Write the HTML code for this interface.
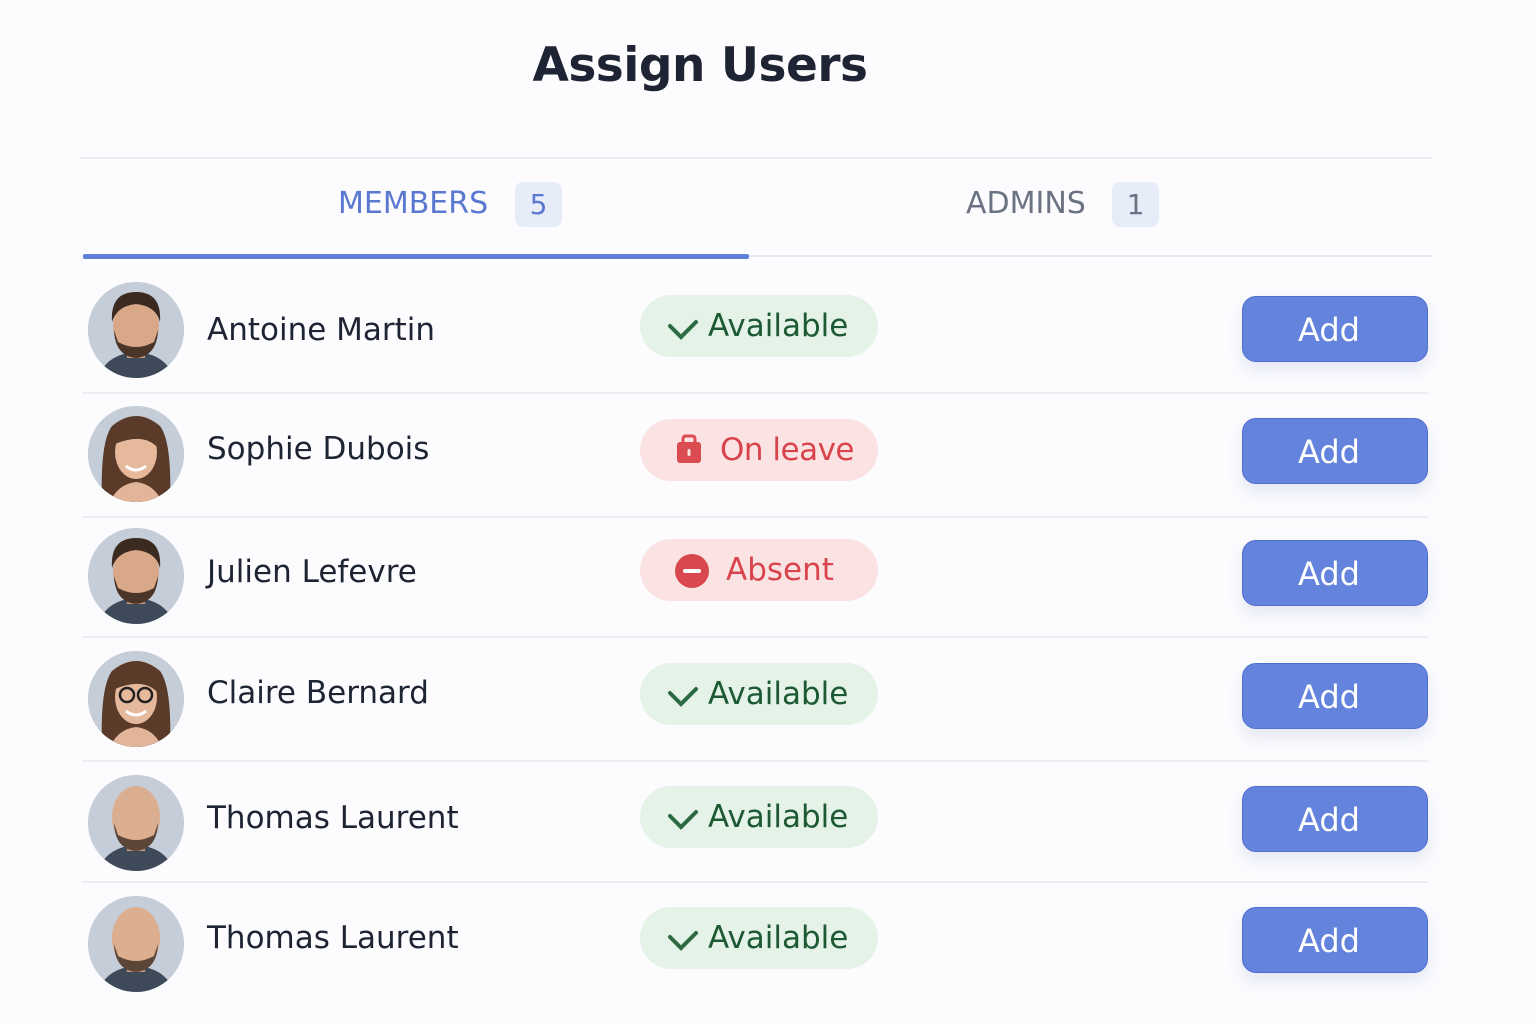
<!DOCTYPE html>
<html><head><meta charset="utf-8"><style>
body{margin:0;width:1536px;height:1024px;background:#fcfcfe;font-family:"DejaVu Sans","Liberation Sans",sans-serif;position:relative;overflow:hidden}
.a{position:absolute}
h1{position:absolute;left:0;width:1400px;text-align:center;top:38px;margin:0;font-size:47px;font-weight:bold;color:#1e2433;font-family:"DejaVu Sans",sans-serif;letter-spacing:-0.5px}
.tab{position:absolute;top:186px;font-size:30px;line-height:36px}
.badge{position:absolute;top:182px;width:47px;height:45px;border-radius:8px;background:#e6ecf8;font-size:28px;line-height:45px;text-align:center}
.name{position:absolute;left:207px;font-size:31px;color:#1e2433;line-height:40px}
.pill{position:absolute;left:640px;width:238px;height:62px;border-radius:31px;font-size:31px;line-height:62px;box-sizing:border-box}
.g{background:#e4f2e7;color:#1d5a34}
.r{background:#fbe3e3;color:#d9444c}
.btn{position:absolute;left:1242px;width:186px;height:66px;border-radius:14px;background:#6383dc;color:#fff;font-size:32px;line-height:66px;text-align:center;box-shadow:0 8px 16px rgba(90,110,180,.15);border:1px solid #4f6fd0;box-sizing:border-box;padding-right:12px}
.div{position:absolute;left:82px;width:1346px;height:2px;background:#ecedf3}
.av{position:absolute;left:88px;width:96px;height:96px;border-radius:50%;overflow:hidden;background:#c3ccd8}
</style></head><body>
<h1>Assign Users</h1>
<div class="a" style="left:80px;top:157px;width:1352px;height:2px;background:#eceef4"></div>
<div class="tab" style="left:338px;color:#5a78d0">MEMBERS</div>
<div class="badge" style="left:515px;color:#5a78d0">5</div>
<div class="tab" style="left:966px;color:#6b7282">ADMINS</div>
<div class="badge" style="left:1112px;color:#6b7282">1</div>
<div class="a" style="left:83px;top:255px;width:1349px;height:2px;background:#e6e9f2"></div>
<div class="a" style="left:83px;top:254px;width:666px;height:5px;background:#5f80d8;border-radius:2px"></div>

<div class="div" style="top:392px"></div>
<div class="div" style="top:516px"></div>
<div class="div" style="top:636px"></div>
<div class="div" style="top:760px"></div>
<div class="div" style="top:881px"></div>

<svg width="0" height="0" style="position:absolute"><defs>
<g id="m"><rect width="96" height="96" fill="#c4cdd8"/><path d="M10 96 Q18 72 48 70 Q78 72 86 96Z" fill="#3e4a5a"/><rect x="39" y="60" width="18" height="16" fill="#c9977a"/><ellipse cx="48" cy="44" rx="23" ry="29" fill="#d8a889"/><path d="M26 48 Q27 74 48 76 Q69 74 70 48 L66 60 Q48 70 30 60Z" fill="#4a3528"/><path d="M24 40 Q22 10 48 10 Q74 10 72 40 Q68 24 48 22 Q29 24 24 40Z" fill="#3a2a20"/></g>
<g id="b"><rect width="96" height="96" fill="#c4cdd8"/><path d="M10 96 Q18 72 48 70 Q78 72 86 96Z" fill="#3e4a5a"/><rect x="39" y="60" width="18" height="16" fill="#c9977a"/><ellipse cx="48" cy="42" rx="24" ry="31" fill="#dcae90"/><path d="M26 48 Q27 74 48 76 Q69 74 70 48 L66 60 Q48 70 30 60Z" fill="#5a4536"/></g>
<g id="f"><rect width="96" height="96" fill="#c4cdd8"/><path d="M14 96 Q12 36 24 20 Q48 0 72 20 Q84 36 82 96Z" fill="#5a3a28"/><path d="M22 96 Q30 78 48 76 Q66 78 74 96Z" fill="#e2b498"/><ellipse cx="48" cy="46" rx="21" ry="27" fill="#e6b89c"/><path d="M27 38 Q34 14 58 20 Q70 28 70 42 Q56 26 27 38Z" fill="#5a3a28"/><path d="M38 60 Q48 68 58 60" stroke="#fff" stroke-width="3" fill="none"/></g>
</defs></svg>
<svg class="av" style="top:282px" viewBox="0 0 96 96"><use href="#m"/></svg>
<svg class="av" style="top:406px" viewBox="0 0 96 96"><use href="#f"/></svg>
<svg class="av" style="top:528px" viewBox="0 0 96 96"><use href="#m"/></svg>
<svg class="av" style="top:651px" viewBox="0 0 96 96"><g><use href="#f"/></g><circle cx="39" cy="44" r="7" fill="none" stroke="#222" stroke-width="2.5"/><circle cx="57" cy="44" r="7" fill="none" stroke="#222" stroke-width="2.5"/></svg>
<svg class="av" style="top:775px" viewBox="0 0 96 96"><use href="#b"/></svg>
<svg class="av" style="top:896px" viewBox="0 0 96 96"><use href="#b"/></svg>

<div class="name" style="top:310px">Antoine Martin</div>
<div class="name" style="top:429px">Sophie Dubois</div>
<div class="name" style="top:552px">Julien Lefevre</div>
<div class="name" style="top:673px">Claire Bernard</div>
<div class="name" style="top:798px">Thomas Laurent</div>
<div class="name" style="top:918px">Thomas Laurent</div>

<div class="pill g" style="top:295px;padding-left:68px">Available</div>
<svg class="a" style="left:667px;top:318px" width="32" height="22"><path d="M3 8 L14 19 L29 4" stroke="#2b6a42" stroke-width="4" fill="none" stroke-linecap="round"/></svg>

<div class="pill r" style="top:419px;padding-left:80px;letter-spacing:-0.5px">On leave</div>
<svg class="a" style="left:673px;top:433px" width="32" height="32"><rect x="4" y="9" width="24" height="21" rx="3" fill="#db4c52"/><path d="M10 10 V6 Q10 3 13 3 H19 Q22 3 22 6 V10" stroke="#db4c52" stroke-width="3" fill="none"/><rect x="14.5" y="16" width="3" height="7" rx="1.5" fill="#fbe3e3"/></svg>

<div class="pill r" style="top:539px;padding-left:86px">Absent</div>
<svg class="a" style="left:674px;top:553px" width="36" height="36"><circle cx="18" cy="18" r="17" fill="#d9484f"/><rect x="9" y="16" width="18" height="4" rx="2" fill="#fff"/></svg>

<div class="pill g" style="top:663px;padding-left:68px">Available</div>
<svg class="a" style="left:667px;top:685px" width="32" height="22"><path d="M3 8 L14 19 L29 4" stroke="#2b6a42" stroke-width="4" fill="none" stroke-linecap="round"/></svg>
<div class="pill g" style="top:786px;padding-left:68px">Available</div>
<svg class="a" style="left:667px;top:808px" width="32" height="22"><path d="M3 8 L14 19 L29 4" stroke="#2b6a42" stroke-width="4" fill="none" stroke-linecap="round"/></svg>
<div class="pill g" style="top:907px;padding-left:68px">Available</div>
<svg class="a" style="left:667px;top:929px" width="32" height="22"><path d="M3 8 L14 19 L29 4" stroke="#2b6a42" stroke-width="4" fill="none" stroke-linecap="round"/></svg>

<div class="btn" style="top:296px">Add</div>
<div class="btn" style="top:418px">Add</div>
<div class="btn" style="top:540px">Add</div>
<div class="btn" style="top:663px">Add</div>
<div class="btn" style="top:786px">Add</div>
<div class="btn" style="top:907px">Add</div>
</body></html>
